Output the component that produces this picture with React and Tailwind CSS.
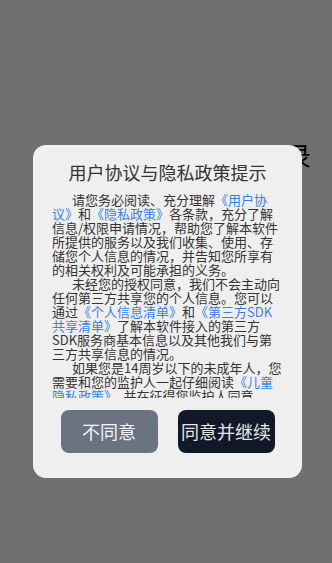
import React from "react";

const FONT = { fontFamily: '"Noto Sans CJK SC", "Noto Sans", sans-serif' };

function Link({ children }) {
  return <span className="text-[#3b7df0]">{children}</span>;
}

export default function App() {
  return (
    <div className="relative h-[563px] w-full overflow-hidden bg-white" style={FONT}>
      {/* page behind the dialog */}
      <div className="absolute top-[142px] left-[285px] text-[26px] leading-none text-black">录</div>

      {/* overlay */}
      <div className="absolute inset-0 bg-black/[0.56]">
        <div className="ml-[33px] mt-[145px] w-[269px] rounded-[13px] bg-[#efefef] pt-[14px] pb-[25px]">
          <h2 className="text-center text-[18px] leading-[26px] text-[#333]">用户协议与隐私政策提示</h2>

          <div className="mt-[8px] h-[205px] overflow-hidden pl-[19px] pr-[19px]">
            <div className="w-[231px] text-[13px] leading-[14px] text-[#333]">
              <p className="indent-[20px]">
                请您务必阅读、充分理解<Link>《用户协议》</Link>和<Link>《隐私政策》</Link>各条款，充分了解信息/权限申请情况，帮助您了解本软件所提供的服务以及我们收集、使用、存储您个人信息的情况，并告知您所享有的相关权利及可能承担的义务。
              </p>
              <p className="indent-[20px]">
                未经您的授权同意，我们不会主动向任何第三方共享您的个人信息。您可以通过<Link>《个人信息清单》</Link>和<Link>《第三方SDK共享清单》</Link>了解本软件接入的第三方SDK服务商基本信息以及其他我们与第三方共享信息的情况。
              </p>
              <p className="indent-[20px]">
                如果您是14周岁以下的未成年人，您需要和您的监护人一起仔细阅读<Link>《儿童隐私政策》</Link>，并在征得您监护人同意。
              </p>
              <p className="indent-[20px]">
                如您同意以上内容，请点击“同意并继续”开始使用我们的产品和服务。
              </p>
            </div>
          </div>

          <div className="mt-[12px] flex justify-center gap-[20px]">
            <button className="h-[43px] w-[97px] rounded-[8px] bg-[#6b7280] text-[18px] text-[#f3f4f6]">不同意</button>
            <button className="h-[43px] w-[97px] rounded-[8px] bg-[#111827] text-[18px] text-[#e5e7eb]">同意并继续</button>
          </div>
        </div>
      </div>
    </div>
  );
}
